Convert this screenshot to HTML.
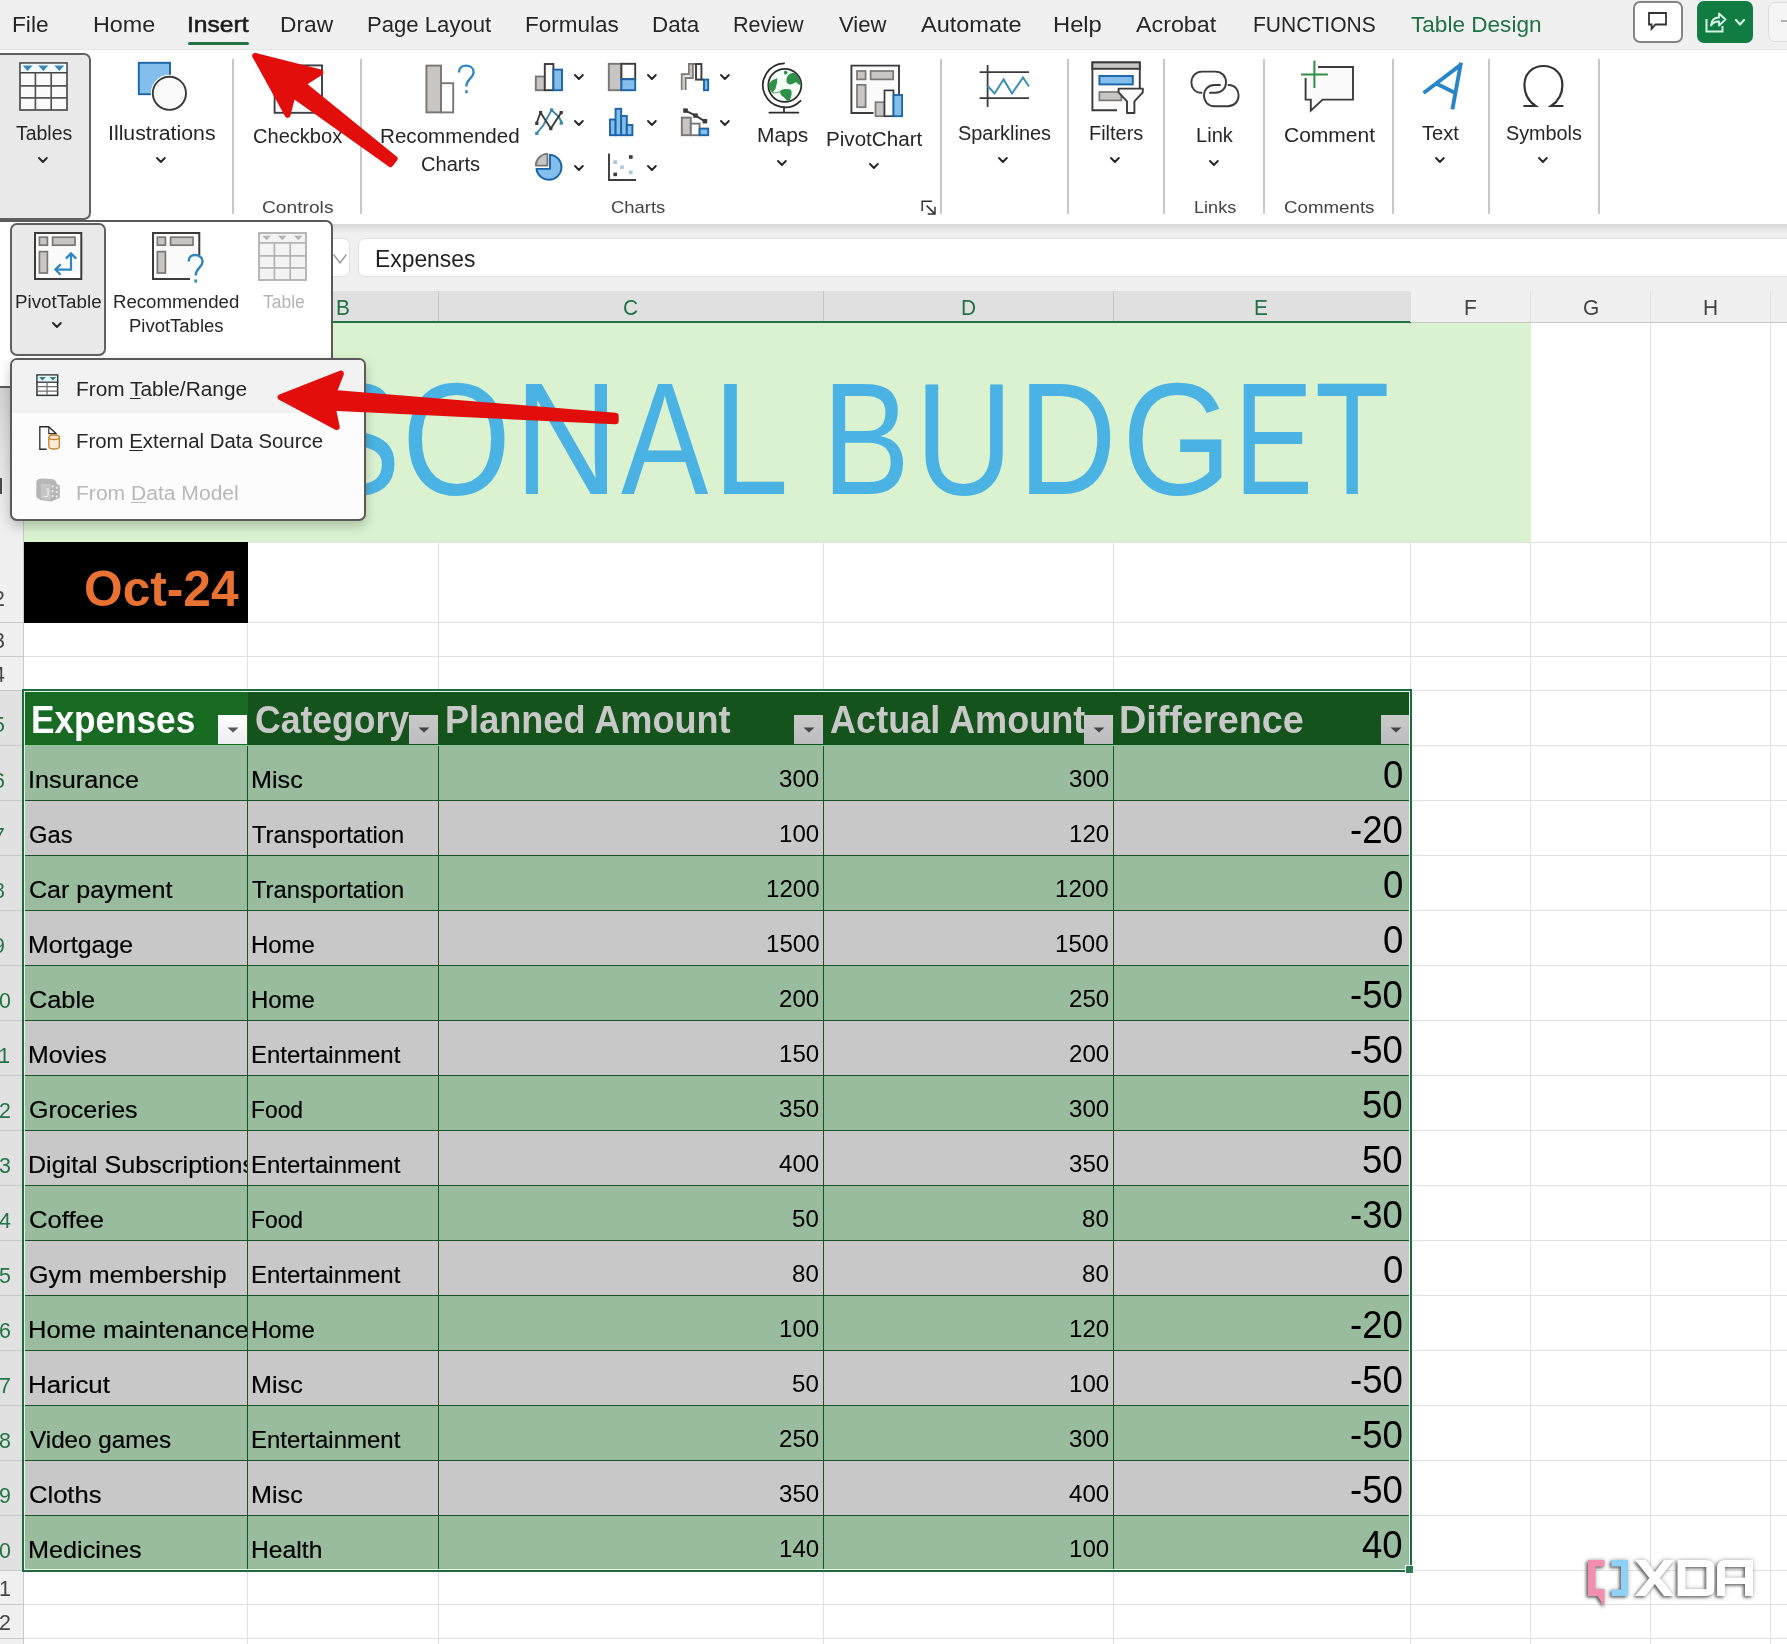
<!DOCTYPE html>
<html><head><meta charset="utf-8"><title>Excel</title>
<style>
html,body{margin:0;padding:0;}
body{width:1787px;height:1644px;position:relative;overflow:hidden;background:#fff;font-family:"Liberation Sans",sans-serif;}
div,svg,span.t{position:absolute;}
span.t{white-space:nowrap;line-height:0;height:0;transform-origin:0 0;display:block;}
svg{overflow:visible;}
u{text-decoration-thickness:1px;text-underline-offset:2px;}
</style></head><body>
<div style="left:247px;top:323px;width:1px;height:1321px;background:#e1e1e1;"></div>
<div style="left:438px;top:323px;width:1px;height:1321px;background:#e1e1e1;"></div>
<div style="left:823px;top:323px;width:1px;height:1321px;background:#e1e1e1;"></div>
<div style="left:1113px;top:323px;width:1px;height:1321px;background:#e1e1e1;"></div>
<div style="left:1410px;top:323px;width:1px;height:1321px;background:#e1e1e1;"></div>
<div style="left:1530px;top:323px;width:1px;height:1321px;background:#e1e1e1;"></div>
<div style="left:1650px;top:323px;width:1px;height:1321px;background:#e1e1e1;"></div>
<div style="left:1770px;top:323px;width:1px;height:1321px;background:#e1e1e1;"></div>
<div style="left:24px;top:542px;width:1763px;height:1px;background:#e1e1e1;"></div>
<div style="left:24px;top:622px;width:1763px;height:1px;background:#e1e1e1;"></div>
<div style="left:24px;top:656px;width:1763px;height:1px;background:#e1e1e1;"></div>
<div style="left:24px;top:690px;width:1763px;height:1px;background:#e1e1e1;"></div>
<div style="left:24px;top:745px;width:1763px;height:1px;background:#e1e1e1;"></div>
<div style="left:24px;top:800px;width:1763px;height:1px;background:#e1e1e1;"></div>
<div style="left:24px;top:855px;width:1763px;height:1px;background:#e1e1e1;"></div>
<div style="left:24px;top:910px;width:1763px;height:1px;background:#e1e1e1;"></div>
<div style="left:24px;top:965px;width:1763px;height:1px;background:#e1e1e1;"></div>
<div style="left:24px;top:1020px;width:1763px;height:1px;background:#e1e1e1;"></div>
<div style="left:24px;top:1075px;width:1763px;height:1px;background:#e1e1e1;"></div>
<div style="left:24px;top:1130px;width:1763px;height:1px;background:#e1e1e1;"></div>
<div style="left:24px;top:1185px;width:1763px;height:1px;background:#e1e1e1;"></div>
<div style="left:24px;top:1240px;width:1763px;height:1px;background:#e1e1e1;"></div>
<div style="left:24px;top:1295px;width:1763px;height:1px;background:#e1e1e1;"></div>
<div style="left:24px;top:1350px;width:1763px;height:1px;background:#e1e1e1;"></div>
<div style="left:24px;top:1405px;width:1763px;height:1px;background:#e1e1e1;"></div>
<div style="left:24px;top:1460px;width:1763px;height:1px;background:#e1e1e1;"></div>
<div style="left:24px;top:1515px;width:1763px;height:1px;background:#e1e1e1;"></div>
<div style="left:24px;top:1570px;width:1763px;height:1px;background:#e1e1e1;"></div>
<div style="left:24px;top:1604px;width:1763px;height:1px;background:#e1e1e1;"></div>
<div style="left:24px;top:1638px;width:1763px;height:1px;background:#e1e1e1;"></div>
<div style="left:24px;top:323px;width:1507px;height:219px;background:#daf2d0;"></div>
<span class="t" style="left:309.75px;top:439px;font-size:159px;color:#4bb3e3;transform:scaleX(0.8558);">S</span>
<span class="t" style="left:402.22px;top:439px;font-size:159px;color:#4bb3e3;transform:scaleX(0.8827);">O</span>
<span class="t" style="left:514.35px;top:439px;font-size:159px;color:#4bb3e3;transform:scaleX(0.9135);">N</span>
<span class="t" style="left:621.40px;top:439px;font-size:159px;color:#4bb3e3;transform:scaleX(0.8246);">A</span>
<span class="t" style="left:712.88px;top:439px;font-size:159px;color:#4bb3e3;transform:scaleX(0.8549);">L</span>
<span class="t" style="left:821.59px;top:439px;font-size:159px;color:#4bb3e3;transform:scaleX(0.8302);">B</span>
<span class="t" style="left:914.70px;top:439px;font-size:159px;color:#4bb3e3;transform:scaleX(0.8558);">U</span>
<span class="t" style="left:1018.32px;top:439px;font-size:159px;color:#4bb3e3;transform:scaleX(0.8597);">D</span>
<span class="t" style="left:1122.28px;top:439px;font-size:159px;color:#4bb3e3;transform:scaleX(0.8883);">G</span>
<span class="t" style="left:1234.13px;top:439px;font-size:159px;color:#4bb3e3;transform:scaleX(0.7463);">E</span>
<span class="t" style="left:1315.10px;top:439px;font-size:159px;color:#4bb3e3;transform:scaleX(0.7659);">T</span>
<div style="left:24px;top:542px;width:224px;height:81px;background:#000;"></div>
<span class="t" style="left:84.25px;top:589px;font-size:50.5px;color:#e97132;font-weight:700;transform:scaleX(0.9839);">Oct-24</span>
<div style="left:24px;top:691px;width:224px;height:54px;background:#196b24;"></div>
<div style="left:248px;top:691px;width:1162px;height:54px;background:#14541c;"></div>
<div style="left:24px;top:745px;width:1386px;height:1px;background:#8cc796;"></div>
<div style="left:24px;top:746px;width:1386px;height:54px;background:#98bc9d;"></div>
<div style="left:24px;top:800px;width:1386px;height:1px;background:#1b5029;"></div>
<div style="left:24px;top:801px;width:1386px;height:54px;background:#c8c8c8;"></div>
<div style="left:24px;top:855px;width:1386px;height:1px;background:#1b5029;"></div>
<div style="left:24px;top:856px;width:1386px;height:54px;background:#98bc9d;"></div>
<div style="left:24px;top:910px;width:1386px;height:1px;background:#1b5029;"></div>
<div style="left:24px;top:911px;width:1386px;height:54px;background:#c8c8c8;"></div>
<div style="left:24px;top:965px;width:1386px;height:1px;background:#1b5029;"></div>
<div style="left:24px;top:966px;width:1386px;height:54px;background:#98bc9d;"></div>
<div style="left:24px;top:1020px;width:1386px;height:1px;background:#1b5029;"></div>
<div style="left:24px;top:1021px;width:1386px;height:54px;background:#c8c8c8;"></div>
<div style="left:24px;top:1075px;width:1386px;height:1px;background:#1b5029;"></div>
<div style="left:24px;top:1076px;width:1386px;height:54px;background:#98bc9d;"></div>
<div style="left:24px;top:1130px;width:1386px;height:1px;background:#1b5029;"></div>
<div style="left:24px;top:1131px;width:1386px;height:54px;background:#c8c8c8;"></div>
<div style="left:24px;top:1185px;width:1386px;height:1px;background:#1b5029;"></div>
<div style="left:24px;top:1186px;width:1386px;height:54px;background:#98bc9d;"></div>
<div style="left:24px;top:1240px;width:1386px;height:1px;background:#1b5029;"></div>
<div style="left:24px;top:1241px;width:1386px;height:54px;background:#c8c8c8;"></div>
<div style="left:24px;top:1295px;width:1386px;height:1px;background:#1b5029;"></div>
<div style="left:24px;top:1296px;width:1386px;height:54px;background:#98bc9d;"></div>
<div style="left:24px;top:1350px;width:1386px;height:1px;background:#1b5029;"></div>
<div style="left:24px;top:1351px;width:1386px;height:54px;background:#c8c8c8;"></div>
<div style="left:24px;top:1405px;width:1386px;height:1px;background:#1b5029;"></div>
<div style="left:24px;top:1406px;width:1386px;height:54px;background:#98bc9d;"></div>
<div style="left:24px;top:1460px;width:1386px;height:1px;background:#1b5029;"></div>
<div style="left:24px;top:1461px;width:1386px;height:54px;background:#c8c8c8;"></div>
<div style="left:24px;top:1515px;width:1386px;height:1px;background:#1b5029;"></div>
<div style="left:24px;top:1516px;width:1386px;height:54px;background:#98bc9d;"></div>
<div style="left:247px;top:746px;width:1px;height:824px;background:#1b5029;"></div>
<div style="left:438px;top:746px;width:1px;height:824px;background:#1b5029;"></div>
<div style="left:823px;top:746px;width:1px;height:824px;background:#1b5029;"></div>
<div style="left:1113px;top:746px;width:1px;height:824px;background:#1b5029;"></div>
<span class="t" style="left:31.00px;top:720px;font-size:38px;color:#fff;font-weight:700;transform:scaleX(0.9254);">Expenses</span>
<span class="t" style="left:254.79px;top:720px;font-size:38px;color:#c8c8c8;font-weight:700;transform:scaleX(0.9354);">Category</span>
<span class="t" style="left:444.54px;top:720px;font-size:38px;color:#c8c8c8;font-weight:700;transform:scaleX(0.9506);">Planned Amount</span>
<span class="t" style="left:830.14px;top:720px;font-size:38px;color:#c8c8c8;font-weight:700;transform:scaleX(0.9499);">Actual Amount</span>
<span class="t" style="left:1119.14px;top:720px;font-size:38px;color:#c8c8c8;font-weight:700;transform:scaleX(0.9939);">Difference</span>
<div style="left:218.3px;top:715px;width:28.5px;height:28.5px;background:linear-gradient(#ffffff,#ececf2);"></div>
<svg style="left:226.8px;top:726.5px;" width="12" height="6" viewBox="0 0 12 6"><path d="M0.5 0.5 H11.5 L6 5.5 Z" fill="#555"/></svg>
<div style="left:409.2px;top:715px;width:28.5px;height:28.5px;background:linear-gradient(#c9c9c9,#bdbdc1);"></div>
<svg style="left:417.7px;top:726.5px;" width="12" height="6" viewBox="0 0 12 6"><path d="M0.5 0.5 H11.5 L6 5.5 Z" fill="#444"/></svg>
<div style="left:794.4px;top:715px;width:28.5px;height:28.5px;background:linear-gradient(#c9c9c9,#bdbdc1);"></div>
<svg style="left:802.9px;top:726.5px;" width="12" height="6" viewBox="0 0 12 6"><path d="M0.5 0.5 H11.5 L6 5.5 Z" fill="#444"/></svg>
<div style="left:1084.4px;top:715px;width:28.5px;height:28.5px;background:linear-gradient(#c9c9c9,#bdbdc1);"></div>
<svg style="left:1092.9px;top:726.5px;" width="12" height="6" viewBox="0 0 12 6"><path d="M0.5 0.5 H11.5 L6 5.5 Z" fill="#444"/></svg>
<div style="left:1381px;top:715px;width:28.5px;height:28.5px;background:linear-gradient(#c9c9c9,#bdbdc1);"></div>
<svg style="left:1389.5px;top:726.5px;" width="12" height="6" viewBox="0 0 12 6"><path d="M0.5 0.5 H11.5 L6 5.5 Z" fill="#444"/></svg>
<div style="left:24px;top:746px;width:223px;height:54px;overflow:hidden;">
<span class="t" style="left:3.73px;top:34px;font-size:24.5px;color:#000;transform:scaleX(1.0315);-webkit-text-stroke:0.2px #000;">Insurance</span>
</div>
<span class="t" style="left:250.83px;top:780px;font-size:24.5px;color:#000;transform:scaleX(1.0278);-webkit-text-stroke:0.2px #000;">Misc</span>
<span class="t" style="left:778.85px;top:779px;font-size:24px;color:#000;transform:scaleX(1.0030);">300</span>
<span class="t" style="left:1068.75px;top:779px;font-size:24px;color:#000;transform:scaleX(1.0030);">300</span>
<span class="t" style="left:1382.76px;top:775px;font-size:38.3px;color:#000;transform:scaleX(0.9550);">0</span>
<div style="left:24px;top:801px;width:223px;height:54px;overflow:hidden;">
<span class="t" style="left:4.59px;top:34px;font-size:24.5px;color:#000;transform:scaleX(0.9692);-webkit-text-stroke:0.2px #000;">Gas</span>
</div>
<span class="t" style="left:252.43px;top:835px;font-size:24.5px;color:#000;transform:scaleX(0.9691);-webkit-text-stroke:0.2px #000;">Transportation</span>
<span class="t" style="left:778.85px;top:834px;font-size:24px;color:#000;transform:scaleX(1.0030);">100</span>
<span class="t" style="left:1068.75px;top:834px;font-size:24px;color:#000;transform:scaleX(1.0030);">120</span>
<span class="t" style="left:1350.24px;top:830px;font-size:38.3px;color:#000;transform:scaleX(0.9550);">-20</span>
<div style="left:24px;top:856px;width:223px;height:54px;overflow:hidden;">
<span class="t" style="left:4.53px;top:34px;font-size:24.5px;color:#000;transform:scaleX(1.0223);-webkit-text-stroke:0.2px #000;">Car payment</span>
</div>
<span class="t" style="left:252.43px;top:890px;font-size:24.5px;color:#000;transform:scaleX(0.9691);-webkit-text-stroke:0.2px #000;">Transportation</span>
<span class="t" style="left:765.50px;top:889px;font-size:24px;color:#000;transform:scaleX(1.0030);">1200</span>
<span class="t" style="left:1055.40px;top:889px;font-size:24px;color:#000;transform:scaleX(1.0030);">1200</span>
<span class="t" style="left:1382.76px;top:885px;font-size:38.3px;color:#000;transform:scaleX(0.9550);">0</span>
<div style="left:24px;top:911px;width:223px;height:54px;overflow:hidden;">
<span class="t" style="left:3.76px;top:34px;font-size:24.5px;color:#000;transform:scaleX(1.0158);-webkit-text-stroke:0.2px #000;">Mortgage</span>
</div>
<span class="t" style="left:250.93px;top:945px;font-size:24.5px;color:#000;transform:scaleX(0.9767);-webkit-text-stroke:0.2px #000;">Home</span>
<span class="t" style="left:765.50px;top:944px;font-size:24px;color:#000;transform:scaleX(1.0030);">1500</span>
<span class="t" style="left:1055.40px;top:944px;font-size:24px;color:#000;transform:scaleX(1.0030);">1500</span>
<span class="t" style="left:1382.76px;top:940px;font-size:38.3px;color:#000;transform:scaleX(0.9550);">0</span>
<div style="left:24px;top:966px;width:223px;height:54px;overflow:hidden;">
<span class="t" style="left:4.51px;top:34px;font-size:24.5px;color:#000;transform:scaleX(1.0327);-webkit-text-stroke:0.2px #000;">Cable</span>
</div>
<span class="t" style="left:250.93px;top:1000px;font-size:24.5px;color:#000;transform:scaleX(0.9767);-webkit-text-stroke:0.2px #000;">Home</span>
<span class="t" style="left:778.85px;top:999px;font-size:24px;color:#000;transform:scaleX(1.0030);">200</span>
<span class="t" style="left:1068.75px;top:999px;font-size:24px;color:#000;transform:scaleX(1.0030);">250</span>
<span class="t" style="left:1350.24px;top:995px;font-size:38.3px;color:#000;transform:scaleX(0.9550);">-50</span>
<div style="left:24px;top:1021px;width:223px;height:54px;overflow:hidden;">
<span class="t" style="left:3.76px;top:34px;font-size:24.5px;color:#000;transform:scaleX(1.0143);-webkit-text-stroke:0.2px #000;">Movies</span>
</div>
<span class="t" style="left:250.93px;top:1055px;font-size:24.5px;color:#000;transform:scaleX(0.9788);-webkit-text-stroke:0.2px #000;">Entertainment</span>
<span class="t" style="left:778.85px;top:1054px;font-size:24px;color:#000;transform:scaleX(1.0030);">150</span>
<span class="t" style="left:1068.75px;top:1054px;font-size:24px;color:#000;transform:scaleX(1.0030);">200</span>
<span class="t" style="left:1350.24px;top:1050px;font-size:38.3px;color:#000;transform:scaleX(0.9550);">-50</span>
<div style="left:24px;top:1076px;width:223px;height:54px;overflow:hidden;">
<span class="t" style="left:4.53px;top:34px;font-size:24.5px;color:#000;transform:scaleX(1.0231);-webkit-text-stroke:0.2px #000;">Groceries</span>
</div>
<span class="t" style="left:251.02px;top:1110px;font-size:24.5px;color:#000;transform:scaleX(0.9324);-webkit-text-stroke:0.2px #000;">Food</span>
<span class="t" style="left:778.85px;top:1109px;font-size:24px;color:#000;transform:scaleX(1.0030);">350</span>
<span class="t" style="left:1068.75px;top:1109px;font-size:24px;color:#000;transform:scaleX(1.0030);">300</span>
<span class="t" style="left:1362.42px;top:1105px;font-size:38.3px;color:#000;transform:scaleX(0.9550);">50</span>
<div style="left:24px;top:1131px;width:223px;height:54px;overflow:hidden;">
<span class="t" style="left:3.74px;top:34px;font-size:24.5px;color:#000;transform:scaleX(1.0229);-webkit-text-stroke:0.2px #000;">Digital Subscriptions</span>
</div>
<span class="t" style="left:250.93px;top:1165px;font-size:24.5px;color:#000;transform:scaleX(0.9788);-webkit-text-stroke:0.2px #000;">Entertainment</span>
<span class="t" style="left:778.85px;top:1164px;font-size:24px;color:#000;transform:scaleX(1.0030);">400</span>
<span class="t" style="left:1068.75px;top:1164px;font-size:24px;color:#000;transform:scaleX(1.0030);">350</span>
<span class="t" style="left:1362.42px;top:1160px;font-size:38.3px;color:#000;transform:scaleX(0.9550);">50</span>
<div style="left:24px;top:1186px;width:223px;height:54px;overflow:hidden;">
<span class="t" style="left:4.50px;top:34px;font-size:24.5px;color:#000;transform:scaleX(1.0458);-webkit-text-stroke:0.2px #000;">Coffee</span>
</div>
<span class="t" style="left:251.02px;top:1220px;font-size:24.5px;color:#000;transform:scaleX(0.9324);-webkit-text-stroke:0.2px #000;">Food</span>
<span class="t" style="left:792.19px;top:1219px;font-size:24px;color:#000;transform:scaleX(1.0030);">50</span>
<span class="t" style="left:1082.09px;top:1219px;font-size:24px;color:#000;transform:scaleX(1.0030);">80</span>
<span class="t" style="left:1350.24px;top:1215px;font-size:38.3px;color:#000;transform:scaleX(0.9550);">-30</span>
<div style="left:24px;top:1241px;width:223px;height:54px;overflow:hidden;">
<span class="t" style="left:4.53px;top:34px;font-size:24.5px;color:#000;transform:scaleX(1.0220);-webkit-text-stroke:0.2px #000;">Gym membership</span>
</div>
<span class="t" style="left:250.93px;top:1275px;font-size:24.5px;color:#000;transform:scaleX(0.9788);-webkit-text-stroke:0.2px #000;">Entertainment</span>
<span class="t" style="left:792.19px;top:1274px;font-size:24px;color:#000;transform:scaleX(1.0030);">80</span>
<span class="t" style="left:1082.09px;top:1274px;font-size:24px;color:#000;transform:scaleX(1.0030);">80</span>
<span class="t" style="left:1382.76px;top:1270px;font-size:38.3px;color:#000;transform:scaleX(0.9550);">0</span>
<div style="left:24px;top:1296px;width:223px;height:54px;overflow:hidden;">
<span class="t" style="left:3.71px;top:34px;font-size:24.5px;color:#000;transform:scaleX(1.0399);-webkit-text-stroke:0.2px #000;">Home maintenance</span>
</div>
<span class="t" style="left:250.93px;top:1330px;font-size:24.5px;color:#000;transform:scaleX(0.9767);-webkit-text-stroke:0.2px #000;">Home</span>
<span class="t" style="left:778.85px;top:1329px;font-size:24px;color:#000;transform:scaleX(1.0030);">100</span>
<span class="t" style="left:1068.75px;top:1329px;font-size:24px;color:#000;transform:scaleX(1.0030);">120</span>
<span class="t" style="left:1350.24px;top:1325px;font-size:38.3px;color:#000;transform:scaleX(0.9550);">-20</span>
<div style="left:24px;top:1351px;width:223px;height:54px;overflow:hidden;">
<span class="t" style="left:3.68px;top:34px;font-size:24.5px;color:#000;transform:scaleX(1.0557);-webkit-text-stroke:0.2px #000;">Haricut</span>
</div>
<span class="t" style="left:250.83px;top:1385px;font-size:24.5px;color:#000;transform:scaleX(1.0278);-webkit-text-stroke:0.2px #000;">Misc</span>
<span class="t" style="left:792.19px;top:1384px;font-size:24px;color:#000;transform:scaleX(1.0030);">50</span>
<span class="t" style="left:1068.75px;top:1384px;font-size:24px;color:#000;transform:scaleX(1.0030);">100</span>
<span class="t" style="left:1350.24px;top:1380px;font-size:38.3px;color:#000;transform:scaleX(0.9550);">-50</span>
<div style="left:24px;top:1406px;width:223px;height:54px;overflow:hidden;">
<span class="t" style="left:5.70px;top:34px;font-size:24.5px;color:#000;transform:scaleX(0.9901);-webkit-text-stroke:0.2px #000;">Video games</span>
</div>
<span class="t" style="left:250.93px;top:1440px;font-size:24.5px;color:#000;transform:scaleX(0.9788);-webkit-text-stroke:0.2px #000;">Entertainment</span>
<span class="t" style="left:778.85px;top:1439px;font-size:24px;color:#000;transform:scaleX(1.0030);">250</span>
<span class="t" style="left:1068.75px;top:1439px;font-size:24px;color:#000;transform:scaleX(1.0030);">300</span>
<span class="t" style="left:1350.24px;top:1435px;font-size:38.3px;color:#000;transform:scaleX(0.9550);">-50</span>
<div style="left:24px;top:1461px;width:223px;height:54px;overflow:hidden;">
<span class="t" style="left:4.50px;top:34px;font-size:24.5px;color:#000;transform:scaleX(1.0438);-webkit-text-stroke:0.2px #000;">Cloths</span>
</div>
<span class="t" style="left:250.83px;top:1495px;font-size:24.5px;color:#000;transform:scaleX(1.0278);-webkit-text-stroke:0.2px #000;">Misc</span>
<span class="t" style="left:778.85px;top:1494px;font-size:24px;color:#000;transform:scaleX(1.0030);">350</span>
<span class="t" style="left:1068.75px;top:1494px;font-size:24px;color:#000;transform:scaleX(1.0030);">400</span>
<span class="t" style="left:1350.24px;top:1490px;font-size:38.3px;color:#000;transform:scaleX(0.9550);">-50</span>
<div style="left:24px;top:1516px;width:223px;height:54px;overflow:hidden;">
<span class="t" style="left:3.73px;top:34px;font-size:24.5px;color:#000;transform:scaleX(1.0294);-webkit-text-stroke:0.2px #000;">Medicines</span>
</div>
<span class="t" style="left:250.87px;top:1550px;font-size:24.5px;color:#000;transform:scaleX(1.0083);-webkit-text-stroke:0.2px #000;">Health</span>
<span class="t" style="left:778.85px;top:1549px;font-size:24px;color:#000;transform:scaleX(1.0030);">140</span>
<span class="t" style="left:1068.75px;top:1549px;font-size:24px;color:#000;transform:scaleX(1.0030);">100</span>
<span class="t" style="left:1362.42px;top:1545px;font-size:38.3px;color:#000;transform:scaleX(0.9550);">40</span>
<div style="left:0px;top:290px;width:1787px;height:33px;background:#f0f0f0;"></div>
<div style="left:24px;top:291px;width:1387px;height:31px;background:#e0e0e0;"></div>
<div style="left:24px;top:321px;width:1387px;height:2px;background:#217346;"></div>
<div style="left:1411px;top:322px;width:376px;height:1px;background:#c6c6c6;"></div>
<div style="left:247px;top:291px;width:1px;height:30px;background:#c4c4c4;"></div>
<div style="left:438px;top:291px;width:1px;height:30px;background:#c4c4c4;"></div>
<div style="left:823px;top:291px;width:1px;height:30px;background:#c4c4c4;"></div>
<div style="left:1113px;top:291px;width:1px;height:30px;background:#c4c4c4;"></div>
<div style="left:1410px;top:291px;width:1px;height:31px;background:#e0e0e0;"></div>
<div style="left:1530px;top:291px;width:1px;height:31px;background:#e0e0e0;"></div>
<div style="left:1650px;top:291px;width:1px;height:31px;background:#e0e0e0;"></div>
<div style="left:1770px;top:291px;width:1px;height:31px;background:#e0e0e0;"></div>
<span class="t" style="left:335.95px;top:308px;font-size:22px;color:#217346;transform:scaleX(0.9500);">B</span>
<span class="t" style="left:623.12px;top:308px;font-size:22px;color:#217346;transform:scaleX(0.9500);">C</span>
<span class="t" style="left:960.50px;top:308px;font-size:22px;color:#217346;transform:scaleX(0.9500);">D</span>
<span class="t" style="left:1254.45px;top:308px;font-size:22px;color:#217346;transform:scaleX(0.9500);">E</span>
<span class="t" style="left:1463.94px;top:308px;font-size:22px;color:#444;transform:scaleX(0.9500);">F</span>
<span class="t" style="left:1582.76px;top:308px;font-size:22px;color:#444;transform:scaleX(0.9500);">G</span>
<span class="t" style="left:1703.29px;top:308px;font-size:22px;color:#444;transform:scaleX(0.9500);">H</span>
<div style="left:0px;top:323px;width:24px;height:1321px;background:#f0f0f0;"></div>
<div style="left:0px;top:691px;width:23px;height:880px;background:#e1e1e1;"></div>
<div style="left:23px;top:323px;width:1px;height:1321px;background:#c8c8c8;"></div>
<div style="left:0px;top:542px;width:23px;height:1px;background:#c8c8c8;"></div>
<div style="left:0px;top:622px;width:23px;height:1px;background:#c8c8c8;"></div>
<div style="left:0px;top:656px;width:23px;height:1px;background:#c8c8c8;"></div>
<div style="left:0px;top:690px;width:23px;height:1px;background:#c8c8c8;"></div>
<div style="left:0px;top:745px;width:23px;height:1px;background:#c8c8c8;"></div>
<div style="left:0px;top:800px;width:23px;height:1px;background:#c8c8c8;"></div>
<div style="left:0px;top:855px;width:23px;height:1px;background:#c8c8c8;"></div>
<div style="left:0px;top:910px;width:23px;height:1px;background:#c8c8c8;"></div>
<div style="left:0px;top:965px;width:23px;height:1px;background:#c8c8c8;"></div>
<div style="left:0px;top:1020px;width:23px;height:1px;background:#c8c8c8;"></div>
<div style="left:0px;top:1075px;width:23px;height:1px;background:#c8c8c8;"></div>
<div style="left:0px;top:1130px;width:23px;height:1px;background:#c8c8c8;"></div>
<div style="left:0px;top:1185px;width:23px;height:1px;background:#c8c8c8;"></div>
<div style="left:0px;top:1240px;width:23px;height:1px;background:#c8c8c8;"></div>
<div style="left:0px;top:1295px;width:23px;height:1px;background:#c8c8c8;"></div>
<div style="left:0px;top:1350px;width:23px;height:1px;background:#c8c8c8;"></div>
<div style="left:0px;top:1405px;width:23px;height:1px;background:#c8c8c8;"></div>
<div style="left:0px;top:1460px;width:23px;height:1px;background:#c8c8c8;"></div>
<div style="left:0px;top:1515px;width:23px;height:1px;background:#c8c8c8;"></div>
<div style="left:0px;top:1570px;width:23px;height:1px;background:#c8c8c8;"></div>
<div style="left:0px;top:1604px;width:23px;height:1px;background:#c8c8c8;"></div>
<div style="left:0px;top:1638px;width:23px;height:1px;background:#c8c8c8;"></div>
<span class="t" style="left:-6.81px;top:599px;font-size:22.5px;color:#444;transform:scaleX(0.9500);">2</span>
<span class="t" style="left:-6.65px;top:641px;font-size:22.5px;color:#444;transform:scaleX(0.9500);">3</span>
<span class="t" style="left:-6.65px;top:675px;font-size:22.5px;color:#444;transform:scaleX(0.9500);">4</span>
<span class="t" style="left:-6.65px;top:725px;font-size:22.5px;color:#217346;transform:scaleX(0.9500);">5</span>
<span class="t" style="left:-6.81px;top:781px;font-size:22.5px;color:#217346;transform:scaleX(0.9500);">6</span>
<span class="t" style="left:-6.81px;top:836px;font-size:22.5px;color:#217346;transform:scaleX(0.9500);">7</span>
<span class="t" style="left:-6.65px;top:891px;font-size:22.5px;color:#217346;transform:scaleX(0.9500);">8</span>
<span class="t" style="left:-6.81px;top:946px;font-size:22.5px;color:#217346;transform:scaleX(0.9500);">9</span>
<span class="t" style="left:-13.09px;top:1001px;font-size:22.5px;color:#217346;transform:scaleX(0.9500);">10</span>
<span class="t" style="left:-12.13px;top:1056px;font-size:22.5px;color:#217346;transform:scaleX(0.9500);">11</span>
<span class="t" style="left:-12.92px;top:1111px;font-size:22.5px;color:#217346;transform:scaleX(0.9500);">12</span>
<span class="t" style="left:-12.92px;top:1166px;font-size:22.5px;color:#217346;transform:scaleX(0.9500);">13</span>
<span class="t" style="left:-13.09px;top:1221px;font-size:22.5px;color:#217346;transform:scaleX(0.9500);">14</span>
<span class="t" style="left:-12.92px;top:1276px;font-size:22.5px;color:#217346;transform:scaleX(0.9500);">15</span>
<span class="t" style="left:-12.92px;top:1331px;font-size:22.5px;color:#217346;transform:scaleX(0.9500);">16</span>
<span class="t" style="left:-12.92px;top:1386px;font-size:22.5px;color:#217346;transform:scaleX(0.9500);">17</span>
<span class="t" style="left:-12.92px;top:1441px;font-size:22.5px;color:#217346;transform:scaleX(0.9500);">18</span>
<span class="t" style="left:-12.92px;top:1496px;font-size:22.5px;color:#217346;transform:scaleX(0.9500);">19</span>
<span class="t" style="left:-12.92px;top:1551px;font-size:22.5px;color:#217346;transform:scaleX(0.9500);">20</span>
<span class="t" style="left:-12.76px;top:1589px;font-size:22.5px;color:#444;transform:scaleX(0.9500);">21</span>
<span class="t" style="left:-12.76px;top:1623px;font-size:22.5px;color:#444;transform:scaleX(0.9500);">22</span>
<div style="left:22px;top:689px;width:1390px;height:2px;background:#21693f;"></div>
<div style="left:22px;top:1570px;width:1390px;height:2px;background:#21693f;"></div>
<div style="left:22px;top:689px;width:2px;height:883px;background:#21693f;"></div>
<div style="left:1410px;top:689px;width:2px;height:883px;background:#21693f;"></div>
<div style="left:24px;top:691px;width:1386px;height:1px;background:#e4fbe9;"></div>
<div style="left:24px;top:1569px;width:1386px;height:1px;background:#e4fbe9;"></div>
<div style="left:24px;top:691px;width:1px;height:879px;background:#e4fbe9;"></div>
<div style="left:1409px;top:691px;width:1px;height:879px;background:#e4fbe9;"></div>
<div style="left:1405px;top:1565px;width:9px;height:9px;background:#fff;"></div>
<div style="left:1406px;top:1566px;width:7px;height:7px;background:#2a7b50;"></div>
<div style="left:0px;top:223px;width:1787px;height:68px;background:#f0f0f0;"></div>
<div style="left:0px;top:224px;width:1787px;height:9px;background:linear-gradient(#d6d6d6,#f0f0f0);"></div>
<div style="left:-20px;top:238px;width:370px;height:39px;background:#fff;border:1px solid #e0e0e0;border-radius:7px;box-sizing:border-box;"></div>
<div style="left:358px;top:238px;width:1500px;height:39px;background:#fff;border:1px solid #e0e0e0;border-radius:7px;box-sizing:border-box;"></div>
<svg style="left:332.3px;top:252.6px;" width="16" height="12" viewBox="0 0 16 12"><path d="M2 2 L8.0 10 L14 2" fill="none" stroke="#9a9a9a" stroke-width="1.4" stroke-linecap="round" stroke-linejoin="round"/></svg>
<span class="t" style="left:375.41px;top:259px;font-size:23px;color:#1f1f1f;transform:scaleX(0.9939);">Expenses</span>
<div style="left:0px;top:49px;width:1787px;height:175px;background:#fff;"></div>
<div style="left:0px;top:0px;width:1787px;height:49px;background:#f0f0f0;"></div>
<div style="left:0px;top:49px;width:1787px;height:1px;background:#e4e4e4;"></div>
<span class="t" style="left:11.63px;top:25px;font-size:22px;color:#262626;transform:scaleX(1.0322);">File</span>
<span class="t" style="left:93.18px;top:25px;font-size:22px;color:#262626;transform:scaleX(1.0610);">Home</span>
<span class="t" style="left:279.92px;top:25px;font-size:22px;color:#262626;transform:scaleX(1.0362);">Draw</span>
<span class="t" style="left:366.97px;top:25px;font-size:22px;color:#262626;transform:scaleX(1.0057);">Page Layout</span>
<span class="t" style="left:525.14px;top:25px;font-size:22px;color:#262626;transform:scaleX(1.0226);">Formulas</span>
<span class="t" style="left:652.35px;top:25px;font-size:22px;color:#262626;transform:scaleX(1.0177);">Data</span>
<span class="t" style="left:733.32px;top:25px;font-size:22px;color:#262626;transform:scaleX(0.9789);">Review</span>
<span class="t" style="left:838.50px;top:25px;font-size:22px;color:#262626;transform:scaleX(1.0030);">View</span>
<span class="t" style="left:920.80px;top:25px;font-size:22px;color:#262626;transform:scaleX(1.0688);">Automate</span>
<span class="t" style="left:1052.85px;top:25px;font-size:22px;color:#262626;transform:scaleX(1.0788);">Help</span>
<span class="t" style="left:1136.30px;top:25px;font-size:22px;color:#262626;transform:scaleX(1.0579);">Acrobat</span>
<span class="t" style="left:1252.56px;top:25px;font-size:22px;color:#262626;transform:scaleX(0.9564);">FUNCTIONS</span>
<span class="t" style="left:186.77px;top:25px;font-size:22px;color:#1a1a1a;transform:scaleX(1.1201);-webkit-text-stroke:0.55px #1a1a1a;">Insert</span>
<span class="t" style="left:1411.35px;top:25px;font-size:22px;color:#1e7145;transform:scaleX(1.0262);">Table Design</span>
<div style="left:188px;top:41.5px;width:61px;height:3.5px;background:#217346;border-radius:2px;"></div>
<div style="left:1633px;top:1px;width:49.5px;height:41.5px;background:#fff;border:2px solid #858585;border-radius:7px;box-sizing:border-box;"></div>
<svg style="left:1647px;top:11px;" width="22" height="21" viewBox="0 0 22 21"><path d="M2 2 H19 V13.5 H8.5 L4.6 17.8 V13.5 H2 Z" fill="none" stroke="#333" stroke-width="1.8" stroke-linejoin="miter"/></svg>
<div style="left:1697px;top:1px;width:56px;height:41.5px;background:#107c41;border-radius:7px;"></div>
<svg style="left:1704px;top:10px;" width="24" height="24" viewBox="0 0 24 24"><path d="M2.5 9 V21.5 H18.5 V16" fill="none" stroke="#d5f5e3" stroke-width="2"/><path d="M7 15.5 C7.5 10 11 7.5 15 7.5 V3.5 L21.5 9.5 L15 15.5 V11.5 C11.5 11.3 9 12.5 7 15.5 Z" fill="none" stroke="#d5f5e3" stroke-width="1.9" stroke-linejoin="round"/></svg>
<svg style="left:1733.5px;top:18.3px;" width="12" height="8.4" viewBox="0 0 12 8.4"><path d="M2 2 L6.0 6.4 L10 2" fill="none" stroke="#d5f5e3" stroke-width="2.2" stroke-linecap="round" stroke-linejoin="round"/></svg>
<div style="left:1768px;top:2px;width:40px;height:40px;background:#f5f5f5;border:1px solid #dcdcdc;border-radius:7px;box-sizing:border-box;"></div>
<div style="left:1781px;top:20px;width:6px;height:2px;background:#b0b0b0;"></div>
<div style="left:232.25px;top:58.5px;width:1.5px;height:155px;background:#c8c8c8;"></div>
<div style="left:360.25px;top:58.5px;width:1.5px;height:155px;background:#c8c8c8;"></div>
<div style="left:940.25px;top:58.5px;width:1.5px;height:155px;background:#c8c8c8;"></div>
<div style="left:1067.25px;top:58.5px;width:1.5px;height:155px;background:#c8c8c8;"></div>
<div style="left:1163.25px;top:58.5px;width:1.5px;height:155px;background:#c8c8c8;"></div>
<div style="left:1263.25px;top:58.5px;width:1.5px;height:155px;background:#c8c8c8;"></div>
<div style="left:1392.25px;top:58.5px;width:1.5px;height:155px;background:#c8c8c8;"></div>
<div style="left:1488.25px;top:58.5px;width:1.5px;height:155px;background:#c8c8c8;"></div>
<div style="left:1598.25px;top:58.5px;width:1.5px;height:155px;background:#c8c8c8;"></div>
<div style="left:-8px;top:53.2px;width:98.8px;height:166.6px;background:#e9e9e9;border:2px solid #616161;border-radius:7px;box-sizing:border-box;"></div>
<svg style="left:19.2px;top:61.8px;" width="49.0" height="49.0" viewBox="0 0 49 49"><rect x="1" y="1" width="47" height="47" fill="#fbfbfb" stroke="#555" stroke-width="1.8"/><rect x="1.9" y="1.9" width="45.2" height="8.4" fill="#f0faff"/><path d="M1 10.8 H48" stroke="#444" stroke-width="1.6" fill="none"/><path d="M1 23.8 H48 M1 35.8 H48 M16.4 10.8 V48 M32.2 10.8 V48" stroke="#555" stroke-width="1.7" fill="none"/><path d="M3.6 3.6 H13.6 L8.6 8.9 Z M19.3 3.6 H29.3 L24.3 8.9 Z M35.3 3.6 H45.3 L40.3 8.9 Z" fill="#3a87b5"/></svg>
<span class="t" style="left:15.70px;top:133px;font-size:20px;color:#262626;transform:scaleX(0.9723);">Tables</span>
<svg style="left:37.4px;top:155.5px;" width="11.8" height="8.0" viewBox="0 0 11.8 8.0"><path d="M2 2 L5.9 6.0 L9.8 2" fill="none" stroke="#262626" stroke-width="1.9" stroke-linecap="round" stroke-linejoin="round"/></svg>
<svg style="left:136.5px;top:60.5px;" width="54" height="52" viewBox="0 0 54 52"><rect x="1.8" y="1.8" width="31.2" height="31.4" fill="#83beec" stroke="#1b64a8" stroke-width="1.9"/><circle cx="32.4" cy="32.3" r="18.6" fill="#fff"/><circle cx="32.4" cy="32.3" r="16.6" fill="#fafafa" stroke="#3b3b3b" stroke-width="1.9"/></svg>
<span class="t" style="left:108.34px;top:133px;font-size:20px;color:#262626;transform:scaleX(1.0630);">Illustrations</span>
<svg style="left:155.3px;top:155.5px;" width="11.8" height="8.0" viewBox="0 0 11.8 8.0"><path d="M2 2 L5.9 6.0 L9.8 2" fill="none" stroke="#262626" stroke-width="1.9" stroke-linecap="round" stroke-linejoin="round"/></svg>
<svg style="left:272px;top:63px;" width="52" height="52" viewBox="0 0 52 52"><rect x="2.6" y="2.4" width="47.4" height="47.4" fill="#fff" stroke="#3b4045" stroke-width="1.9"/></svg>
<span class="t" style="left:252.86px;top:136px;font-size:20px;color:#262626;transform:scaleX(1.0030);">Checkbox</span>
<span class="t" style="left:261.50px;top:208px;font-size:17px;color:#444;transform:scaleX(1.1293);">Controls</span>
<svg style="left:424px;top:63px;" width="54" height="52" viewBox="0 0 54 52"><rect x="2.4" y="2.6" width="14.6" height="46.8" fill="#c8c6c4" stroke="#797775" stroke-width="1.9"/><rect x="17" y="20.2" width="12.2" height="29.2" fill="#fff" stroke="#797775" stroke-width="1.9"/><path d="M35 9.5 C35 4.5 38.5 2.6 42 2.6 C46.2 2.6 49.6 5 49.6 9.2 C49.6 15 42.3 16 42.3 23.5" fill="none" stroke="#2e86c1" stroke-width="2.3"/><rect x="41.2" y="27.2" width="2.4" height="3" fill="#2e86c1"/></svg>
<span class="t" style="left:380.39px;top:136px;font-size:20px;color:#262626;transform:scaleX(1.0305);">Recommended</span>
<span class="t" style="left:420.76px;top:164px;font-size:20px;color:#262626;transform:scaleX(1.0030);">Charts</span>
<svg style="left:535px;top:63px;" width="28" height="28" viewBox="0 0 28 28"><rect x="0.8" y="13.5" width="9" height="13.7" fill="#c8c6c4" stroke="#797775" stroke-width="1.9"/><rect x="9.8" y="1" width="8.6" height="26.2" fill="#fff" stroke="#3b3b3b" stroke-width="1.9"/><rect x="18.4" y="6.6" width="8.6" height="20.6" fill="#83beec" stroke="#1b64a8" stroke-width="1.9"/></svg>
<svg style="left:608px;top:63px;" width="28" height="28" viewBox="0 0 28 28"><rect x="0.8" y="0.8" width="12.6" height="26.4" fill="#c8c6c4" stroke="#797775" stroke-width="1.9"/><rect x="13.4" y="0.8" width="13.8" height="15.4" fill="#fff" stroke="#3b3b3b" stroke-width="1.9"/><rect x="13.4" y="16.2" width="13.8" height="11" fill="#83beec" stroke="#1b64a8" stroke-width="1.9"/></svg>
<svg style="left:681px;top:63px;" width="28" height="28" viewBox="0 0 28 28"><path d="M0.8 27 V11.3 H8 V1 H14.5" fill="none" stroke="#797775" stroke-width="1.9"/><path d="M4.6 27 V15 H11.8 V1" fill="none" stroke="#797775" stroke-width="1.9"/><rect x="1.5" y="12" width="2.4" height="15" fill="#c8c6c4"/><rect x="8.7" y="1.7" width="2.4" height="12.6" fill="#c8c6c4"/><rect x="15" y="1" width="5.4" height="15.6" fill="#fff" stroke="#3b3b3b" stroke-width="1.9"/><path d="M20.4 16.6 H23" stroke="#3b3b3b" stroke-width="1.9"/><rect x="23" y="16.6" width="4.2" height="10.6" fill="#83beec" stroke="#1b64a8" stroke-width="1.9"/></svg>
<svg style="left:535px;top:108.3px;" width="28" height="28" viewBox="0 0 28 28"><path d="M1.5 25.5 L8.5 17 L16.5 2 L24 9 L27 15" fill="none" stroke="#3a87ad" stroke-width="1.9"/><path d="M1.5 15.5 L5.5 4.5 L15.8 20.5 L26.3 4.5" fill="none" stroke="#3b3b3b" stroke-width="1.9"/><rect x="0.2" y="13.8" width="3.2" height="3.2" fill="#3b3b3b"/><rect x="4" y="3" width="3.2" height="3.2" fill="#3b3b3b"/><rect x="14.2" y="19" width="3.2" height="3.2" fill="#3b3b3b"/><rect x="24.6" y="3" width="3.2" height="3.2" fill="#3b3b3b"/><rect x="0.2" y="23.8" width="3.2" height="3.2" fill="#3a87ad"/><rect x="15" y="0.4" width="3.2" height="3.2" fill="#3a87ad"/><rect x="24.6" y="13.5" width="3.2" height="3.2" fill="#3a87ad"/></svg>
<svg style="left:608px;top:108.3px;" width="28" height="28" viewBox="0 0 28 28"><rect x="2" y="11.5" width="5.6" height="15.7" fill="#83beec" stroke="#1b64a8" stroke-width="1.9"/><rect x="7.6" y="0.8" width="5.6" height="26.4" fill="#83beec" stroke="#1b64a8" stroke-width="1.9"/><rect x="13.2" y="8" width="5.6" height="19.2" fill="#83beec" stroke="#1b64a8" stroke-width="1.9"/><rect x="18.8" y="17" width="5.6" height="10.2" fill="#83beec" stroke="#1b64a8" stroke-width="1.9"/></svg>
<svg style="left:681px;top:108.3px;" width="28" height="28" viewBox="0 0 28 28"><rect x="0.8" y="9.6" width="9" height="17.6" fill="#c8c6c4" stroke="#797775" stroke-width="1.9"/><rect x="9.8" y="15.6" width="8.8" height="11.6" fill="#fff" stroke="#797775" stroke-width="1.9"/><rect x="18.6" y="20.6" width="8.6" height="6.6" fill="#83beec" stroke="#1b64a8" stroke-width="1.9"/><path d="M4.5 2.6 L14.5 7.6 L24 13.4" fill="none" stroke="#3b3b3b" stroke-width="1.9"/><rect x="2.2" y="0.4" width="4.6" height="4.4" fill="#3b3b3b"/><rect x="12.2" y="5.4" width="4.6" height="4.4" fill="#3b3b3b"/><rect x="21.6" y="11" width="4.6" height="4.4" fill="#3b3b3b"/></svg>
<svg style="left:535px;top:153px;" width="28" height="28" viewBox="0 0 28 28"><path d="M15 14.5 V1.6 A12.6 12.6 0 1 1 1.4 15.9 H15 Z" fill="#83beec" stroke="#1b64a8" stroke-width="1.9" stroke-linejoin="round"/><path d="M12.4 12.6 H0.8 A11.8 11.8 0 0 1 12.4 0.9 Z" fill="#c8c6c4" stroke="#797775" stroke-width="1.9" stroke-linejoin="round"/></svg>
<svg style="left:608px;top:153px;" width="28" height="28" viewBox="0 0 28 28"><path d="M1 0.4 V27 H28" fill="none" stroke="#3b3b3b" stroke-width="1.9"/><rect x="21" y="2.2" width="3.6" height="3.6" fill="#3b3b3b"/><rect x="5.4" y="19.6" width="3.6" height="3.6" fill="#3b3b3b"/><rect x="5.4" y="7.4" width="3.6" height="3.6" fill="#a6c8dc"/><rect x="12.2" y="12.4" width="3.6" height="3.6" fill="#a6c8dc"/><rect x="21" y="17.6" width="3.6" height="3.6" fill="#a6c8dc"/></svg>
<svg style="left:573.1px;top:73.2px;" width="11.8" height="8.0" viewBox="0 0 11.8 8.0"><path d="M2 2 L5.9 6.0 L9.8 2" fill="none" stroke="#262626" stroke-width="1.9" stroke-linecap="round" stroke-linejoin="round"/></svg>
<svg style="left:646.1px;top:73.2px;" width="11.8" height="8.0" viewBox="0 0 11.8 8.0"><path d="M2 2 L5.9 6.0 L9.8 2" fill="none" stroke="#262626" stroke-width="1.9" stroke-linecap="round" stroke-linejoin="round"/></svg>
<svg style="left:573.1px;top:118.6px;" width="11.8" height="8.0" viewBox="0 0 11.8 8.0"><path d="M2 2 L5.9 6.0 L9.8 2" fill="none" stroke="#262626" stroke-width="1.9" stroke-linecap="round" stroke-linejoin="round"/></svg>
<svg style="left:646.1px;top:118.6px;" width="11.8" height="8.0" viewBox="0 0 11.8 8.0"><path d="M2 2 L5.9 6.0 L9.8 2" fill="none" stroke="#262626" stroke-width="1.9" stroke-linecap="round" stroke-linejoin="round"/></svg>
<svg style="left:573.1px;top:163.5px;" width="11.8" height="8.0" viewBox="0 0 11.8 8.0"><path d="M2 2 L5.9 6.0 L9.8 2" fill="none" stroke="#262626" stroke-width="1.9" stroke-linecap="round" stroke-linejoin="round"/></svg>
<svg style="left:646.1px;top:163.5px;" width="11.8" height="8.0" viewBox="0 0 11.8 8.0"><path d="M2 2 L5.9 6.0 L9.8 2" fill="none" stroke="#262626" stroke-width="1.9" stroke-linecap="round" stroke-linejoin="round"/></svg>
<svg style="left:719.1px;top:73.2px;" width="11.8" height="8.0" viewBox="0 0 11.8 8.0"><path d="M2 2 L5.9 6.0 L9.8 2" fill="none" stroke="#262626" stroke-width="1.9" stroke-linecap="round" stroke-linejoin="round"/></svg>
<svg style="left:719.1px;top:118.6px;" width="11.8" height="8.0" viewBox="0 0 11.8 8.0"><path d="M2 2 L5.9 6.0 L9.8 2" fill="none" stroke="#262626" stroke-width="1.9" stroke-linecap="round" stroke-linejoin="round"/></svg>
<span class="t" style="left:610.64px;top:208px;font-size:17px;color:#444;transform:scaleX(1.0851);">Charts</span>
<svg style="left:750px;top:55px;" width="65" height="65" viewBox="0 0 1644 1644"><circle cx="880" cy="767" r="418" fill="#f4fff6" stroke="#2b2b2b" stroke-width="44"/><g fill="#2f9149"><path d="M925 600 C940 520 1000 470 1090 450 C1180 470 1260 560 1290 740 C1260 800 1200 700 1150 690 C1110 720 1060 750 1000 745 C940 730 905 680 925 600 Z"/><path d="M860 420 C890 380 940 390 950 440 C940 490 890 510 865 480 Z"/><path d="M560 640 L690 590 L685 700 L655 800 L645 860 L600 905 L575 965 C500 900 465 820 468 740 L500 700 Z"/><path d="M770 900 C830 860 940 850 1030 875 C1070 930 1050 1050 1015 1130 C990 1160 960 1170 930 1150 C900 1090 830 1050 785 1010 C760 970 755 930 770 900 Z"/><path d="M580 955 C620 970 700 940 775 935" fill="none" stroke="#2f9149" stroke-width="22"/></g><path d="M862 212 A556 556 0 1 0 1278 1158" fill="none" stroke="#2b2b2b" stroke-width="44" stroke-linecap="round"/><path d="M860 1320 V1455 M490 1455 H1225" fill="none" stroke="#2b2b2b" stroke-width="44" stroke-linecap="round"/></svg>
<span class="t" style="left:756.76px;top:135px;font-size:20px;color:#262626;transform:scaleX(1.0488);">Maps</span>
<svg style="left:776.3px;top:158.5px;" width="11.8" height="8.0" viewBox="0 0 11.8 8.0"><path d="M2 2 L5.9 6.0 L9.8 2" fill="none" stroke="#262626" stroke-width="1.9" stroke-linecap="round" stroke-linejoin="round"/></svg>
<svg style="left:849px;top:63px;" width="56" height="56" viewBox="0 0 56 56"><path d="M24.5 50 H2.4 V2.6 H50 V32" fill="#fbfbfb" stroke="#3b3b3b" stroke-width="1.9"/><rect x="8" y="8" width="8.6" height="8.4" fill="#c8c6c4" stroke="#797775" stroke-width="1.7"/><rect x="21.6" y="8" width="22.6" height="8.4" fill="#c8c6c4" stroke="#797775" stroke-width="1.7"/><rect x="8" y="21.8" width="8.6" height="22.4" fill="#c8c6c4" stroke="#797775" stroke-width="1.7"/><rect x="26.5" y="39.2" width="9" height="14" fill="#c8c6c4" stroke="#797775" stroke-width="1.7"/><rect x="35.5" y="27.4" width="9" height="25.8" fill="#fff" stroke="#3b3b3b" stroke-width="1.7"/><rect x="44.5" y="32" width="8.6" height="21.2" fill="#83beec" stroke="#1b64a8" stroke-width="1.8"/></svg>
<span class="t" style="left:826.49px;top:139px;font-size:20px;color:#262626;transform:scaleX(1.0307);">PivotChart</span>
<svg style="left:868.2px;top:161.5px;" width="11.8" height="8.0" viewBox="0 0 11.8 8.0"><path d="M2 2 L5.9 6.0 L9.8 2" fill="none" stroke="#262626" stroke-width="1.9" stroke-linecap="round" stroke-linejoin="round"/></svg>
<svg style="left:920.5px;top:199.5px;" width="16" height="16" viewBox="0 0 16 16"><path d="M1.2 11 V1.2 H11 M5.6 5.6 L13.6 13.6 M14 6.8 V14 H6.8" fill="none" stroke="#333" stroke-width="1.5"/></svg>
<svg style="left:978px;top:64px;" width="54" height="46" viewBox="0 0 54 46"><path d="M9.6 1 V43 M1.6 8.2 H51 M1.6 34.2 H51" fill="none" stroke="#3b3b3b" stroke-width="1.8"/><path d="M9.6 22 L16.6 29.5 L25.6 15.5 L34 29.5 L45 13.5 L51 22.5" fill="none" stroke="#3a8fb7" stroke-width="2"/></svg>
<span class="t" style="left:957.98px;top:133px;font-size:20px;color:#262626;transform:scaleX(0.9963);">Sparklines</span>
<svg style="left:997.1px;top:155.5px;" width="11.8" height="8.0" viewBox="0 0 11.8 8.0"><path d="M2 2 L5.9 6.0 L9.8 2" fill="none" stroke="#262626" stroke-width="1.9" stroke-linecap="round" stroke-linejoin="round"/></svg>
<svg style="left:1090px;top:60px;" width="56" height="56" viewBox="0 0 56 56"><path d="M27 50.2 H2.4 V2.4 H49.8 V28" fill="#fbfbfb" stroke="#3b3b3b" stroke-width="1.9"/><rect x="2.4" y="2.4" width="47.4" height="6.4" fill="#c8c6c4" stroke="#3b3b3b" stroke-width="1.9"/><rect x="9.4" y="16" width="33.4" height="8.4" fill="#83beec" stroke="#1b64a8" stroke-width="1.9"/><rect x="9.4" y="32" width="22" height="8.4" fill="#c8c6c4" stroke="#797775" stroke-width="1.7"/><path d="M28.6 28.6 H52.8 V32.4 L44.4 41.4 V53 H37 V41.4 L28.6 32.4 Z" fill="#fbfbfb" stroke="#3b3b3b" stroke-width="1.9" stroke-linejoin="round"/></svg>
<span class="t" style="left:1088.64px;top:133px;font-size:20px;color:#262626;transform:scaleX(0.9968);">Filters</span>
<svg style="left:1109.1px;top:155.5px;" width="11.8" height="8.0" viewBox="0 0 11.8 8.0"><path d="M2 2 L5.9 6.0 L9.8 2" fill="none" stroke="#262626" stroke-width="1.9" stroke-linecap="round" stroke-linejoin="round"/></svg>
<svg style="left:1189px;top:69px;" width="52" height="40" viewBox="0 0 52 40"><path d="M12.5 23.8 C5.5 23.8 2.4 18.5 2.4 13.4 C2.4 7.5 6.5 2.6 13 2.6 H26.5 C33 2.6 37 7.5 37 13.2 C37 19 33 23.8 26.5 23.8 H21" fill="none" stroke="#3b3b3b" stroke-width="1.9" stroke-linecap="round"/><path d="M39.5 16 C46.5 16 49.6 21.3 49.6 26.4 C49.6 32.3 45.5 37.2 39 37.2 H25.5 C19 37.2 15 32.3 15 26.6 C15 20.8 19 16 25.5 16 H31" fill="none" stroke="#3b3b3b" stroke-width="1.9" stroke-linecap="round"/></svg>
<span class="t" style="left:1195.73px;top:135px;font-size:20px;color:#262626;transform:scaleX(1.0041);">Link</span>
<svg style="left:1208.2px;top:158.5px;" width="11.8" height="8.0" viewBox="0 0 11.8 8.0"><path d="M2 2 L5.9 6.0 L9.8 2" fill="none" stroke="#262626" stroke-width="1.9" stroke-linecap="round" stroke-linejoin="round"/></svg>
<span class="t" style="left:1193.69px;top:208px;font-size:17px;color:#444;transform:scaleX(1.0653);">Links</span>
<svg style="left:1299px;top:59px;" width="58" height="54" viewBox="0 0 58 54"><path d="M19 8 H54 V40.6 H23.6 L11.8 51.6 V40.6 H6.6 V19" fill="#fbfbfb" stroke="#3b3b3b" stroke-width="1.9"/><path d="M15.4 1.6 V29 M2 15.4 H28.8" fill="none" stroke="#2f8f46" stroke-width="2"/></svg>
<span class="t" style="left:1283.62px;top:135px;font-size:20px;color:#262626;transform:scaleX(1.0497);">Comment</span>
<span class="t" style="left:1283.72px;top:208px;font-size:17px;color:#444;transform:scaleX(1.1007);">Comments</span>
<svg style="left:1419px;top:60px;" width="46" height="54" viewBox="0 0 46 54"><path d="M42 2.6 L33.4 49.4 M4.6 33 L41 5.4 M17.6 23.8 L37.4 33.6" fill="none" stroke="#2886c8" stroke-width="3.9"/></svg>
<span class="t" style="left:1422.29px;top:133px;font-size:20px;color:#262626;transform:scaleX(1.0043);">Text</span>
<svg style="left:1434.3px;top:155.5px;" width="11.8" height="8.0" viewBox="0 0 11.8 8.0"><path d="M2 2 L5.9 6.0 L9.8 2" fill="none" stroke="#262626" stroke-width="1.9" stroke-linecap="round" stroke-linejoin="round"/></svg>
<svg style="left:1521px;top:63px;" width="46" height="46" viewBox="0 0 46 46"><path d="M2.4 43 H14.6 C8 38.5 3.4 32 3.4 22 C3.4 10.5 11.5 3 22.4 3 C33.3 3 41.4 10.5 41.4 22 C41.4 32 36.8 38.5 30.2 43 H42.4" fill="none" stroke="#333" stroke-width="2.2"/></svg>
<span class="t" style="left:1506.08px;top:133px;font-size:20px;color:#262626;transform:scaleX(0.9900);">Symbols</span>
<svg style="left:1537.2px;top:155.5px;" width="11.8" height="8.0" viewBox="0 0 11.8 8.0"><path d="M2 2 L5.9 6.0 L9.8 2" fill="none" stroke="#262626" stroke-width="1.9" stroke-linecap="round" stroke-linejoin="round"/></svg>
<div style="left:0px;top:387px;width:23px;height:175px;background:linear-gradient(#d2d2d2,#dcdcdc 20%,#e8e8e8 50%,#eeeeee 80%,#f0f0f0);"></div>
<div style="left:0px;top:478px;width:2px;height:16px;background:#4a4a4a;"></div>
<div style="left:-8px;top:220px;width:340.6px;height:167.6px;background:#fff;border:2px solid #5a5a5a;border-radius:7px;box-sizing:border-box;"></div>
<div style="left:10.4px;top:223.4px;width:95.2px;height:132.6px;background:#e9e9e9;border:2px solid #616161;border-radius:7px;box-sizing:border-box;"></div>
<svg style="left:33px;top:231px;" width="50" height="50" viewBox="0 0 50 50"><path d="M2 2 H48.3 V48 H2 Z" fill="#fbfbfb" stroke="#3b3b3b" stroke-width="2"/><rect x="6.4" y="6.2" width="8" height="8" fill="#c8c6c4" stroke="#797775" stroke-width="1.7"/><rect x="19.6" y="6.2" width="22.4" height="8" fill="#c8c6c4" stroke="#797775" stroke-width="1.7"/><rect x="6.4" y="20.6" width="8" height="21.4" fill="#c8c6c4" stroke="#797775" stroke-width="1.7"/><path d="M22.4 38.6 H38 V22.6" fill="none" stroke="#2e86c1" stroke-width="2.2"/><path d="M27.6 33.4 L22.4 38.6 L27.6 43.8 M32.8 27.6 L38 22.4 L43.2 27.6" fill="none" stroke="#2e86c1" stroke-width="2.2"/></svg>
<span class="t" style="left:14.53px;top:302px;font-size:18px;color:#262626;transform:scaleX(1.0429);">PivotTable</span>
<svg style="left:50.9px;top:321.1px;" width="11.8" height="8.0" viewBox="0 0 11.8 8.0"><path d="M2 2 L5.9 6.0 L9.8 2" fill="none" stroke="#262626" stroke-width="1.9" stroke-linecap="round" stroke-linejoin="round"/></svg>
<svg style="left:150.6px;top:231px;" width="56" height="56" viewBox="0 0 56 56"><path d="M39 48 H2 V2 H48.3 V24" fill="#fbfbfb" stroke="#3b3b3b" stroke-width="2"/><rect x="6.4" y="6.2" width="8" height="8" fill="#c8c6c4" stroke="#797775" stroke-width="1.7"/><rect x="19.6" y="6.2" width="22.4" height="8" fill="#c8c6c4" stroke="#797775" stroke-width="1.7"/><rect x="6.4" y="20.6" width="8" height="21.4" fill="#c8c6c4" stroke="#797775" stroke-width="1.7"/><path d="M37.6 30.5 C37.6 26 40.6 24 44 24 C48 24 51.6 26.4 51.6 30.6 C51.6 36.4 44.6 37 44.6 44.6" fill="none" stroke="#2e86c1" stroke-width="2.4"/><rect x="43.4" y="48.4" width="2.6" height="3.2" fill="#2e86c1"/></svg>
<span class="t" style="left:113.34px;top:302px;font-size:18px;color:#262626;transform:scaleX(1.0347);">Recommended</span>
<span class="t" style="left:128.66px;top:326px;font-size:18px;color:#262626;transform:scaleX(1.0267);">PivotTables</span>
<svg style="left:258.4px;top:231.6px;" width="49" height="49" viewBox="0 0 49 49"><rect x="1" y="1" width="47" height="47" fill="#f3f3f3" stroke="#b4b4b4" stroke-width="1.9"/><path d="M1 10.8 H48 M1 23.8 H48 M1 35.8 H48 M16.4 10.8 V48 M32.2 10.8 V48" stroke="#b4b4b4" stroke-width="1.7" fill="none"/><path d="M4.4 3.8 H12.8 L8.6 8.2 Z M20.1 3.8 H28.5 L24.3 8.2 Z M36.1 3.8 H44.5 L40.3 8.2 Z" fill="#b4b4b4"/></svg>
<span class="t" style="left:263.43px;top:302px;font-size:18px;color:#b4b4b4;transform:scaleX(0.9710);">Table</span>
<div style="left:10.4px;top:357.8px;width:356px;height:163.4px;background:#fcfcfc;border:2px solid #5a5a5a;border-radius:7px;box-sizing:border-box;box-shadow:0 5px 12px rgba(0,0,0,0.22);"></div>
<div style="left:12.4px;top:359.8px;width:352px;height:53px;background:#f2f2f2;border-radius:5px 5px 0 0;"></div>
<svg style="left:25px;top:365px;" width="50" height="145" viewBox="0 0 567 1644"><rect x="136" y="113" width="234" height="231" fill="#fff" stroke="#2f3336" stroke-width="17"/><rect x="145" y="122" width="216" height="66" fill="#dff6f8"/><path d="M128 195 H378" stroke="#2f3336" stroke-width="15" fill="none"/><path d="M136 246 H370 M136 297 H370 M250 195 V344" stroke="#6f6f6f" stroke-width="14" fill="none"/><path d="M160 137 H236 L198 176 Z M278 137 H354 L316 176 Z" fill="#3a7c86"/><path d="M245 955 H168 V700 H268 L358 782" fill="none" stroke="#2b2b2b" stroke-width="15"/><path d="M270 700 V778 H352" fill="none" stroke="#2b2b2b" stroke-width="13"/><path d="M270 820 V925 C270 962 390 962 390 925 V820" fill="#fdebd3" stroke="#c9822e" stroke-width="15"/><ellipse cx="330" cy="820" rx="60" ry="26" fill="#fdebd3" stroke="#c9822e" stroke-width="15"/><path d="M128 1330 C128 1300 160 1290 200 1287 L320 1295 L355 1318 V1345 L395 1370 V1505 L300 1548 L175 1530 L128 1500 Z" fill="#b5b5b5"/><path d="M180 1345 L290 1350 V1535 L180 1515 Z" fill="#c6c6c6"/><path d="M302 1365 h22 v22 h-22 Z M302 1420 h22 v22 h-22 Z M302 1475 h22 v22 h-22 Z M350 1380 h22 v22 h-22 Z M350 1430 h22 v22 h-22 Z M350 1480 h22 v22 h-22 Z" fill="#ececec"/><path d="M240 1405 H262 V1470 C262 1495 225 1500 212 1485" fill="none" stroke="#ececec" stroke-width="14"/></svg>
<span class="t" style="left:76.37px;top:389px;font-size:20px;color:#262626;transform:scaleX(1.0420);">From <u>T</u>able/Range</span>
<span class="t" style="left:76.41px;top:441px;font-size:20px;color:#262626;transform:scaleX(1.0194);">From <u>E</u>xternal Data Source</span>
<span class="t" style="left:76.35px;top:493px;font-size:20px;color:#b8b8b8;transform:scaleX(1.0533);">From <u>D</u>ata Model</span>
<svg style="left:0;top:0" width="1787" height="600" viewBox="0 0 1787 600"><g fill="#e20e0b" stroke="#e20e0b" stroke-linejoin="round"><path stroke-width="5" d="M299.3 80.8 L395.3 158.6 L390.5 164.8 L289.2 92.6 Z"/><path stroke-width="7" d="M328 393.1 L615.2 416.15 L615.2 420.8 L328 407 Z"/><path stroke-width="6" d="M255.2 55.8 L320.3 72.4 L302.3 83.9 L292.7 94.5 L287.6 114.8 Z"/><path stroke-width="6" d="M280.5 397.2 L340.9 373.6 L333.3 393 L332.7 407.7 L336.7 427 Z"/></g></svg>
<svg style="left:1570px;top:1545px;" width="200" height="80" viewBox="1570 1545 200 80"><defs><filter id="ws" x="-20%" y="-30%" width="140%" height="160%"><feGaussianBlur stdDeviation="1.5"/></filter><filter id="ws2" x="-20%" y="-30%" width="140%" height="160%"><feGaussianBlur stdDeviation="2.6"/></filter></defs><g filter="url(#ws2)" fill="#666" opacity="0.45"><path d="M1588 1560 H1604.5 V1566.5 H1595.5 V1589 H1604.5 V1606.5 L1597.5 1596 H1588 Z"/><path d="M1611.5 1560 H1628 V1596 H1611.5 V1589.5 H1621 V1566.5 H1611.5 Z"/><path d="M1635 1560 H1645.5 L1654.8 1572 L1664 1560 H1674.3 L1660 1578 L1674.3 1596 H1664 L1654.8 1584 L1645.5 1596 H1635 L1649.4 1578 Z"/><path d="M1677.5 1560 H1706 Q1714.3 1560 1714.3 1568 V1588 Q1714.3 1596 1706 1596 H1677.5 Z M1685.5 1567 V1589 H1706.3 V1567 Z" fill-rule="evenodd"/><path d="M1717 1596 V1568 Q1717 1560 1725 1560 H1753 V1596 H1745 V1584 H1725 V1596 Z M1725 1567 V1577.5 H1745 V1567 Z" fill-rule="evenodd"/></g><g filter="url(#ws)" fill="#4a4a4a" opacity="0.8" transform="translate(-1.8,1.6)"><path d="M1588 1560 H1604.5 V1566.5 H1595.5 V1589 H1604.5 V1606.5 L1597.5 1596 H1588 Z"/><path d="M1611.5 1560 H1628 V1596 H1611.5 V1589.5 H1621 V1566.5 H1611.5 Z"/><path d="M1635 1560 H1645.5 L1654.8 1572 L1664 1560 H1674.3 L1660 1578 L1674.3 1596 H1664 L1654.8 1584 L1645.5 1596 H1635 L1649.4 1578 Z"/><path d="M1677.5 1560 H1706 Q1714.3 1560 1714.3 1568 V1588 Q1714.3 1596 1706 1596 H1677.5 Z M1685.5 1567 V1589 H1706.3 V1567 Z" fill-rule="evenodd"/><path d="M1717 1596 V1568 Q1717 1560 1725 1560 H1753 V1596 H1745 V1584 H1725 V1596 Z M1725 1567 V1577.5 H1745 V1567 Z" fill-rule="evenodd"/></g><g fill="#f28fb0"><path d="M1588 1560 H1604.5 V1566.5 H1595.5 V1589 H1604.5 V1606.5 L1597.5 1596 H1588 Z"/></g><g fill="#8fd0f5"><path d="M1611.5 1560 H1628 V1596 H1611.5 V1589.5 H1621 V1566.5 H1611.5 Z"/></g><g fill="#fff"><path d="M1635 1560 H1645.5 L1654.8 1572 L1664 1560 H1674.3 L1660 1578 L1674.3 1596 H1664 L1654.8 1584 L1645.5 1596 H1635 L1649.4 1578 Z"/><path d="M1677.5 1560 H1706 Q1714.3 1560 1714.3 1568 V1588 Q1714.3 1596 1706 1596 H1677.5 Z M1685.5 1567 V1589 H1706.3 V1567 Z" fill-rule="evenodd"/><path d="M1717 1596 V1568 Q1717 1560 1725 1560 H1753 V1596 H1745 V1584 H1725 V1596 Z M1725 1567 V1577.5 H1745 V1567 Z" fill-rule="evenodd"/></g></svg>
</body></html>
